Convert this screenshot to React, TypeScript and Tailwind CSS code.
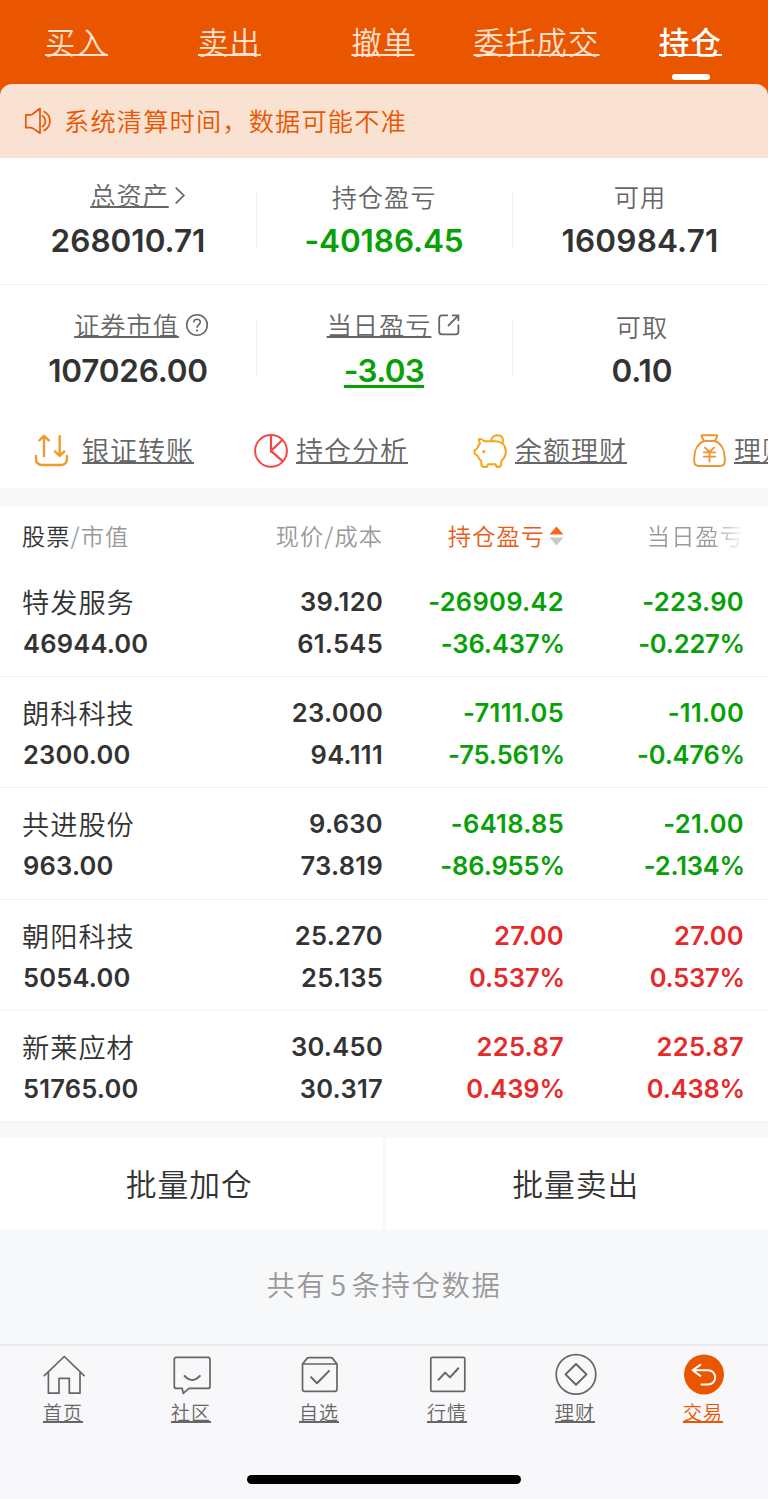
import React from 'react';
import clsx from 'clsx';

const UNDERLINE = 'underline [text-decoration-skip-ink:none]';

const NAV_ITEMS = [
  { label: '买入', width: 'w-[153px]' },
  { label: '卖出', width: 'w-[153px]' },
  { label: '撤单', width: 'w-[154px]' },
  { label: '委托成交', width: 'w-[153px]' },
];

interface Holding {
  name: string;
  value: string;
  price: string;
  cost: string;
  profit: string;
  profitRate: string;
  today: string;
  todayRate: string;
}

const HOLDINGS: Holding[] = [
  { name: '特发服务', value: '46944.00', price: '39.120', cost: '61.545', profit: '-26909.42', profitRate: '-36.437%', today: '-223.90', todayRate: '-0.227%' },
  { name: '朗科科技', value: '2300.00', price: '23.000', cost: '94.111', profit: '-7111.05', profitRate: '-75.561%', today: '-11.00', todayRate: '-0.476%' },
  { name: '共进股份', value: '963.00', price: '9.630', cost: '73.819', profit: '-6418.85', profitRate: '-86.955%', today: '-21.00', todayRate: '-2.134%' },
  { name: '朝阳科技', value: '5054.00', price: '25.270', cost: '25.135', profit: '27.00', profitRate: '0.537%', today: '27.00', todayRate: '0.537%' },
  { name: '新莱应材', value: '51765.00', price: '30.450', cost: '30.317', profit: '225.87', profitRate: '0.439%', today: '225.87', todayRate: '0.438%' },
];

type IconProps = { className?: string };

const SpeakerIcon = ({ className }: IconProps) => (
  <svg className={className} viewBox="0 0 28 28" fill="none" stroke="currentColor" strokeWidth="1.7" strokeLinejoin="round">
    <path d="M1.8 7.8H6.5Q8 7.6 9 6.8L16 1.5V26.3L9 21.4Q8 20.8 6.5 20.7H1.8Z" />
    <path d="M17.8 8.4C22.6 11 22.6 17.4 17.8 20M19.6 4.2C28 8.5 28 19.5 19.6 23.8" />
  </svg>
);

const ChevronIcon = ({ className }: IconProps) => (
  <svg className={className} viewBox="0 0 12 20" fill="none" stroke="currentColor" strokeWidth="1.8">
    <path d="M1.5 1.8L10 10L1.5 18.2" />
  </svg>
);

const HelpIcon = ({ className }: IconProps) => (
  <svg className={className} viewBox="0 0 24 24" fill="none" stroke="currentColor" strokeWidth="1.6">
    <circle cx="12" cy="12" r="10.3" />
    <path d="M8.7 9.6C8.7 5 15.5 5.2 15.3 9.3C15.2 11.6 12 11.8 12 14.8" />
    <circle cx="12" cy="17.6" r="1.1" fill="currentColor" stroke="none" />
  </svg>
);

const ShareIcon = ({ className }: IconProps) => (
  <svg className={className} viewBox="0 0 24 24" fill="none" stroke="currentColor" strokeWidth="1.8">
    <path d="M11 2.4H5Q2.2 2.4 2.2 5.2V18.8Q2.2 21.4 5 21.4H18.8Q21.4 21.4 21.4 18.8V11.5" />
    <path d="M15 2.4H21.4V8M21.4 2.4L11 13" />
  </svg>
);

const TransferIcon = ({ className }: IconProps) => (
  <svg className={className} viewBox="0 0 36 36" fill="none" stroke="#f09a2e" strokeWidth="2.4" strokeLinecap="round" strokeLinejoin="round">
    <path d="M10 22V2M5.4 6.4L10 1.9L14.8 6.4M25.7 2V22M20.9 17.4L25.7 22L30.3 17.4" />
    <path d="M2 22V24.5Q2 31 8.5 31H26.5Q33 31 33 24.5V22" />
  </svg>
);

const PieIcon = ({ className }: IconProps) => (
  <svg className={className} viewBox="0 0 36 36" fill="none" stroke="#f84545" strokeWidth="2">
    <circle cx="18" cy="16.9" r="15.9" />
    <path d="M18 1V16.9L29.4 6M18 16.9L29.8 27.3" strokeWidth="2.2" />
  </svg>
);

const PiggyIcon = ({ className }: IconProps) => (
  <svg className={className} viewBox="0 0 36 36" fill="none" stroke="#f7a516" strokeWidth="2" strokeLinecap="round" strokeLinejoin="round">
    <path d="M12.5 7.2Q10 4.6 7.3 5Q6.6 5 7 6.5L8 9.5Q6 11.5 5.3 14Q4.7 15.5 3.3 15.8Q2.3 16 2.4 17Q2.4 19.5 3.4 20.4Q5.4 21 6.4 23.5Q7.4 25.6 9.3 26.8V30Q9.5 33 12 33H13.5Q15.5 33 16 30.2L23.5 30.2Q24 33 26.2 33Q29 33 29.2 30V27Q33.8 23.5 33.8 17.5C33.8 11 29.5 7.3 23 7.3Z" />
    <path d="M19 7Q19.8 1.2 25.3 1.2Q31.4 1.4 31 7.2Q30.9 8.5 30.3 9.4" />
    <circle cx="11.7" cy="17.6" r="1.6" fill="#f7a516" stroke="none" />
  </svg>
);

const MoneyBagIcon = ({ className }: IconProps) => (
  <svg className={className} viewBox="0 0 36 36" fill="none" stroke="#f09433" strokeWidth="1.9" strokeLinecap="round" strokeLinejoin="round">
    <path d="M11 1.3H25.6Q26.6 1.3 26.2 2.3L24 7H13L10.6 2.3Q10.2 1.3 11 1.3Z" />
    <path d="M13 7C6.5 9.5 3.2 16.5 3.2 24V27Q3.2 32 8 32H29Q33.8 32 33.8 27V24C33.8 16.5 30.5 9.5 24 7" />
    <path d="M14 13.6L18.5 18L23 13.6M18.5 18V27.5M12.8 18.4H24.2M12.8 22.6H24.2" />
  </svg>
);

const SortIcon = ({ className }: IconProps) => (
  <svg className={className} viewBox="0 0 15 20">
    <path d="M7.5 .4L14.5 8.6H.5Z" fill="#fa6418" />
    <path d="M7.5 19.6L14.5 11.6H.5Z" fill="#c8c8c8" />
  </svg>
);

const TABS = [
  {
    label: '首页',
    icon: <path d="M3.8 25.2L24.3 5.5L44.6 25.2M8.4 21V42.2H19V27.3H29.3V42.2H40V21" />,
  },
  {
    label: '社区',
    icon: (
      <>
        <path d="M8.3 6.4H40Q42 6.4 42 8.4V35.4Q42 37.4 40 37.4H21L15.2 42.4L14.2 37.4H8.3Q6.3 37.4 6.3 35.4V8.4Q6.3 6.4 8.3 6.4Z" />
        <path d="M16 24.4Q24.2 33.5 32.4 24.4" strokeWidth="2" />
      </>
    ),
  },
  {
    label: '自选',
    icon: (
      <>
        <path d="M6.5 13L11 7.4Q11.6 6.7 12.6 6.7H35Q36 6.7 36.6 7.4L41 13V38Q41 40.4 38.6 40.4H8.9Q6.5 40.4 6.5 38ZM6.5 13H41" />
        <path d="M14.5 25.6L21 32.2L33.6 19.4" strokeWidth="2" />
      </>
    ),
  },
  {
    label: '行情',
    icon: (
      <>
        <rect x="6.8" y="6.4" width="34" height="34" rx="1.5" />
        <path d="M14 29.4L21.2 21.6L26 26.4L34.8 16.8" strokeWidth="2" />
      </>
    ),
  },
  {
    label: '理财',
    icon: (
      <>
        <circle cx="24" cy="23.4" r="19.8" />
        <path d="M24 13L34.5 23.4L24 33.8L13.5 23.4Z" strokeWidth="2" />
      </>
    ),
  },
  {
    label: '交易',
    active: true,
    icon: (
      <>
        <circle cx="24" cy="23.4" r="20" fill="#ea5500" stroke="none" />
        <path d="M21 13.4L12.6 19.2L21 25.4M13 19.2H28a7.2 7.2 0 0 1 0 14.4H20.6" stroke="#fff" strokeWidth="2" />
      </>
    ),
  },
];

interface StatProps {
  label: string;
  value: string;
  icon?: React.ReactNode;
  labelClass?: string;
  valueClass?: string;
  divider?: boolean;
}

const Stat: React.FC<StatProps> = ({ label, value, icon, labelClass, valueClass = 'text-[#333]', divider }) => (
  <div className="flex">
    <div className="flex flex-1 flex-col items-center">
      <div className={clsx('flex h-9 items-center text-[25.2px] leading-9 tracking-[1px] text-[#666]', labelClass)}>
        <span className={clsx(icon && UNDERLINE, icon && 'underline-offset-1 decoration-[1.5px]')}>{label}</span>
        {icon}
      </div>
      <div className={clsx("h-[52px] font-['Inter'] text-[31.5px] leading-[54px] font-semibold", valueClass)}>{value}</div>
    </div>
    {divider && <div className="mt-[13px] -mr-px h-14 w-px bg-[#f0f0f2]" />}
  </div>
);

const QuickLink = ({ icon, label, className }: { icon: React.ReactNode; label: string; className?: string }) => (
  <div className={clsx('flex shrink-0 items-center', className)}>
    {icon}
    <span className={clsx('-mt-0.5 text-[27px] leading-9 tracking-[1px] text-[#666] underline-offset-1 decoration-[1.5px]', UNDERLINE)}>{label}</span>
  </div>
);

const HoldingRow = ({ item }: { item: Holding }) => {
  const color = item.profit.startsWith('-') ? 'text-[#07a007]' : 'text-[#e62a2a]';
  return (
    <div className="grid h-[111.2px] grid-cols-[200px_160px_181px_180px] border-b border-[#f4f4f6] pt-[15px] pl-[23px] font-['Inter'] text-[25.5px] leading-[42px] font-semibold tracking-[0.3px] text-[#333]">
      <div>
        <div className="-ml-px h-[42px] font-['Noto_Sans_CJK_SC'] text-[27.2px] leading-[41px] font-[350] tracking-[1px]">{item.name}</div>
        <div className="tracking-[0.2px]">{item.value}</div>
      </div>
      <div className="text-right">
        <div>{item.price}</div>
        <div>{item.cost}</div>
      </div>
      <div className={clsx('text-right', color)}>
        <div>{item.profit}</div>
        <div className="-mr-px tracking-[-0.1px]">{item.profitRate}</div>
      </div>
      <div className={clsx('text-right', color)}>
        <div>{item.today}</div>
        <div className="-mr-px tracking-[-0.2px]">{item.todayRate}</div>
      </div>
    </div>
  );
};

const App: React.FC = () => {
  return (
    <div className="flex h-[1499px] w-[768px] flex-col overflow-hidden bg-[#f7f8fa] font-['Noto_Sans_CJK_SC',sans-serif] font-[350] text-[#333]">
      {/* 顶部导航 */}
      <div className="bg-[#ea5500]">
        <div className="flex h-[84px] text-[30.3px] leading-[82px] tracking-[1.2px] text-[#fde0ce]">
          {NAV_ITEMS.map((item) => (
            <div key={item.label} className={clsx('text-center underline-offset-0 decoration-2', UNDERLINE, item.width)}>
              {item.label}
            </div>
          ))}
          <div className="relative w-[155px] text-center font-medium text-white">
            <span className={clsx('underline-offset-0 decoration-2', UNDERLINE)}>持仓</span>
            <div className="absolute top-[74px] left-[59px] h-1.5 w-[38px] rounded-full bg-white" />
          </div>
        </div>
        <div className="flex h-[74px] items-center rounded-t-xl bg-[#fae2d3] pl-6 text-[#ea5500]">
          <SpeakerIcon className="mr-3 h-7 w-7" />
          <span className="-mt-[3px] text-[25.2px] leading-9 tracking-[1.2px]">系统清算时间，数据可能不准</span>
        </div>
      </div>

      {/* 资产概览 */}
      <div className="bg-white">
        <div className="grid h-[127px] grid-cols-3 border-b border-[#f1f1f3] pt-5">
          <Stat label="总资产" value="268010.71" labelClass="pb-1 pl-5" icon={<ChevronIcon className="mt-[3px] ml-[5px] h-[19px] w-3" />} divider />
          <Stat label="持仓盈亏" value="-40186.45" valueClass="text-[#07a007] tracking-[-0.1px]" divider />
          <Stat label="可用" value="160984.71" valueClass="text-[#333] tracking-[0.2px]" />
        </div>
        <div className="grid h-[129px] grid-cols-3 pt-[23px]">
          <Stat label="证券市值" value="107026.00" labelClass="pb-1 pl-[27px]" valueClass="text-[#333] tracking-[-0.2px]" icon={<HelpIcon className="mt-[2px] ml-[6px] h-6 w-6" />} divider />
          <Stat
            label="当日盈亏"
            value="-3.03"
            labelClass="pb-1 pl-[20px]"
            valueClass="text-[#07a007] tracking-[-0.7px] underline underline-offset-[3px] decoration-[2.5px] [text-decoration-skip-ink:none]"
            icon={<ShareIcon className="mt-[2px] ml-[6px] h-6 w-6" />}
            divider
          />
          <Stat label="可取" value="0.10" labelClass="pl-1" valueClass="text-[#333] pl-1" />
        </div>

        <div className="flex h-[74px] items-center overflow-hidden pl-[34px]">
          <QuickLink icon={<TransferIcon className="mt-0.5 mr-3 h-9 w-9" />} label="银证转账" className="w-[219px]" />
          <QuickLink icon={<PieIcon className="mt-0.5 mr-[7px] h-9 w-9" />} label="持仓分析" className="w-[219px]" />
          <QuickLink icon={<PiggyIcon className="mt-0.5 mr-[7px] h-9 w-9" />} label="余额理财" className="w-[219px]" />
          <QuickLink icon={<MoneyBagIcon className="mt-0.5 mr-[7px] h-9 w-9" />} label="理财" />
        </div>
      </div>

      {/* 持仓列表 */}
      <div className="mt-[18px] bg-white">
        <div className="grid h-[60px] grid-cols-[200px_160px_181px_180px] pl-[23px] text-[23.2px] leading-[59px] tracking-[1.1px] text-[#999]">
          <div className="-ml-px">
            <span className="text-[#333]">股票</span>/市值
          </div>
          <div className="text-right">现价/成本</div>
          <div className="flex items-center justify-end text-[#ea5a14]">
            <span className="-mt-0.5">持仓盈亏</span>
            <SortIcon className="ml-1 h-5 w-[15px]" />
          </div>
          <div className="bg-linear-to-r from-[#999] from-82% to-white to-100% bg-clip-text text-right text-transparent">当日盈亏</div>
        </div>
        {HOLDINGS.map((item) => (
          <HoldingRow key={item.name} item={item} />
        ))}
      </div>

      <div className="mt-[15px] grid h-[93px] grid-cols-2 gap-[3px] text-center text-[30.8px] leading-[91px] tracking-[1px]">
        <div className="bg-white pr-1">批量加仓</div>
        <div className="bg-white pr-0.5">批量卖出</div>
      </div>

      <div className="h-[114px] text-center text-[28.4px] leading-[108px] tracking-[1.6px] text-[#999]">
        共有<span className="mx-1">5</span>条持仓数据
      </div>

      {/* 底部标签栏 */}
      <div className="flex flex-1 flex-col items-center border-t-2 border-[#e9eaec] bg-[#f8f8fb]">
        <div className="grid w-full grid-cols-6 pt-[5px]">
          {TABS.map((tab) => (
            <div key={tab.label} className={clsx('flex flex-col items-center', tab.active ? 'text-[#ea5500]' : 'text-[#666]')}>
              <svg className="h-12 w-12" viewBox="0 0 48 48" fill="none" stroke="currentColor" strokeWidth="1.7" strokeLinejoin="round">
                {tab.icon}
              </svg>
              <span className={clsx('mr-0.5 h-7 text-[19px] leading-[26px] tracking-[1px] underline-offset-1 decoration-[1.5px]', UNDERLINE)}>{tab.label}</span>
            </div>
          ))}
        </div>
        <div className="mt-[48px] h-[9px] w-[274px] rounded-full bg-black" />
      </div>
    </div>
  );
};

export default App;
